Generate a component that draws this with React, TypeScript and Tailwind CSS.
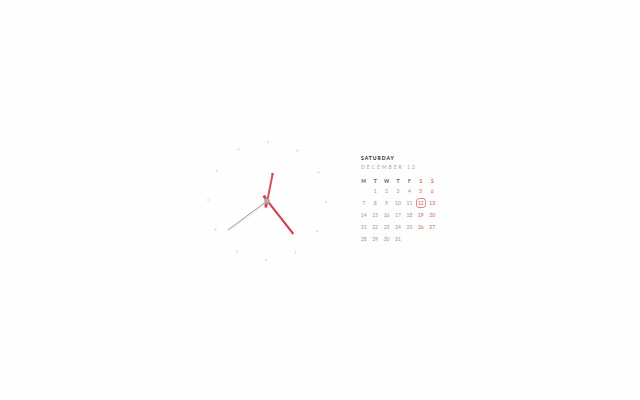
const weekdays = ["M", "T", "W", "T", "F", "S", "S"];
const weekdayNames = ["Monday", "Tuesday", "Wednesday", "Thursday", "Friday", "Saturday", "Sunday"];
const today = 12;

// December opens on a Tuesday; null marks an empty cell.
const weeks: (number | null)[][] = Array.from({ length: 5 }, (_, week) =>
  Array.from({ length: 7 }, (_, day) => {
    const date = week * 7 + day;
    return date >= 1 && date <= 31 ? date : null;
  }),
);

function Clock() {
  const marks = Array.from({ length: 12 }, (_, i) => i * 30 + 1);
  return (
    <svg className="size-[120px] shrink-0" viewBox="0 0 120 120" role="img" aria-label="Clock">
      {marks.map((angle) => (
        <path key={angle} d="M60 0.2V2.2" stroke="#d8d8d8" strokeWidth="1.5" transform={`rotate(${angle} 60 60)`} />
      ))}
      <path d="M60 61.5L24 88.5" stroke="#f3f3f3" strokeWidth="2" />
      <path d="M58.9 66L60.3 60L65.7 32.5" fill="none" stroke="#d9515c" strokeWidth="2" />
      <path d="M58.7 66.5L59.4 61.5" stroke="#cf4a55" strokeWidth="2.8" />
      <path d="M65.3 33.8L65.6 32.2" stroke="#a83743" strokeWidth="2" />
      <path d="M57 54.8L60 59.5L86.4 93" fill="none" stroke="#d5434f" strokeWidth="2.1" />
      <path d="M56.6 54.6L59.5 58.8" stroke="#cf4a55" strokeWidth="2.8" />
      <path d="M60 60L21 89" stroke="#7c7c7c" strokeWidth="0.8" />
      <circle cx="60" cy="60" r="2.8" fill="#b5aaa5" />
    </svg>
  );
}

function Calendar() {
  return (
    <section className="w-20 pb-[3px]">
      <header className="pl-[3px] whitespace-nowrap">
        <h1 className="text-[5px] leading-2 font-bold tracking-[1px] text-[#222222]">SATURDAY</h1>
        <p className="pt-px text-[5px] leading-2 tracking-[2px] text-[#a8a8a8]">DECEMBER 12</p>
      </header>
      <table className="mt-[6px] w-full table-fixed border-collapse text-center text-[5px]">
        <thead>
          <tr className="h-2 leading-2">
            {weekdays.map((name, i) => (
              <th
                key={i}
                scope="col"
                abbr={weekdayNames[i]}
                className={i > 4 ? "p-0 font-bold text-[#dc6670]" : "p-0 font-bold text-[#5c5c5c]"}
              >
                {name}
              </th>
            ))}
          </tr>
        </thead>
        <tbody>
          {weeks.map((week, w) => (
            <tr key={w} className="h-3">
              {week.map((date, i) => (
                <td key={i} className={i > 4 ? "p-0 text-[#d45762]" : "p-0 text-[#969696]"}>
                  {date === today ? (
                    <span className="mx-auto -my-px flex size-[10px] items-center justify-center rounded-[3px] border border-[#dc8a91] leading-2">
                      {date}
                    </span>
                  ) : (
                    <span className="block leading-2">{date}</span>
                  )}
                </td>
              ))}
            </tr>
          ))}
        </tbody>
      </table>
    </section>
  );
}

export default function App() {
  return (
    <main className="flex min-h-screen items-center justify-center gap-[31px] bg-[#fefefe] pt-[2px] pl-[5px] font-['Lato',sans-serif]">
      <Clock />
      <Calendar />
    </main>
  );
}
